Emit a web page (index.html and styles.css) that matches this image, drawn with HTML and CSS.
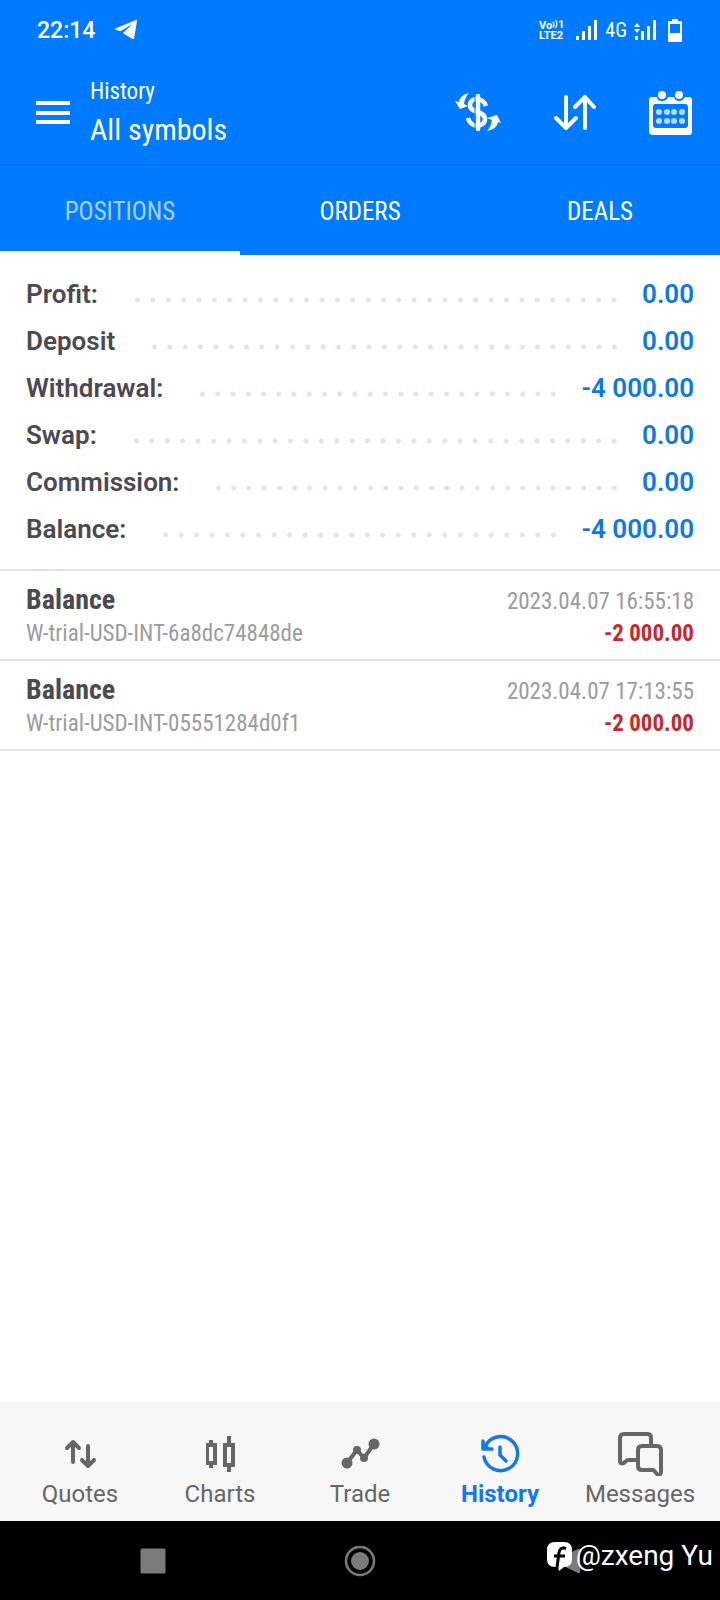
FILE: index.html
```html
<!DOCTYPE html>
<html lang="en">
<head>
<meta charset="utf-8">
<meta name="viewport" content="width=device-width, initial-scale=1">
<title>History</title>
<link rel="stylesheet" href="styles.css">
</head>
<body>
<div class="app">
  <div class="status">
    <div class="status-group">
      <span class="clock">22:14</span>
      <svg class="telegram" width="22" height="20" viewBox="0 0 22 20" aria-hidden="true"><path fill="currentColor" d="M21.200 0 .8 8.200C-.3 8.700-.2 9.400.8 9.700L5.500 11.200 15 5.500c.6-.4 1 0 .5.4L8.200 12.700v.6l8.800 5.500c1 .6 1.900.3 2.200-.9L22 1c.1-.9-.2-1.200-.8-1z"/></svg>
    </div>
    <div class="status-group">
      <svg class="volte" width="28" height="26" viewBox="0 0 28 26" role="img" aria-label="VoLTE 1 2">
        <text x="0" y="12">Vo</text><text x="19" y="11">1</text><text x="0" y="22">LTE2</text>
        <path fill="none" stroke="currentColor" stroke-width="1.300" d="M14 4.500q2 3 0 6M16.500 3q2.700 4 0 8"/>
      </svg>
      <svg class="signal" width="22" height="20" viewBox="0 0 22 20" aria-hidden="true"><path fill="currentColor" d="M0 16h3v4H0zM6 11h3v9H6zM12 6h3v14h-3zM18 0h3v20h-3z"/></svg>
      <span class="network">4G</span>
      <svg class="signal" width="22" height="20" viewBox="0 0 22 20" aria-hidden="true"><path fill="currentColor" d="M1 16h3v4H1zM7 11h3v9H7zM13 6h3v14h-3zM19 0h3v20h-3zM0 7l3-4 3 4zM0 9h6l-3 4z"/></svg>
      <svg class="battery" width="14" height="23" viewBox="0 0 14 23" aria-hidden="true"><path fill="currentColor" fill-rule="evenodd" d="M4 0h6v2h3q1 0 1 1v19q0 1-1 1H1q-1 0-1-1V3q0-1 1-1h3zM2 5v9h10V5z"/></svg>
    </div>
  </div>

  <header class="toolbar">
    <button class="icon-button" aria-label="Menu"><svg width="34" height="24" viewBox="0 0 34 24"><path fill="currentColor" d="M0 0h34v4H0zM0 10h34v4H0zM0 19h34v4H0z"/></svg></button>
    <div class="titles">
      <p class="overline">History</p>
      <h1 class="title">All symbols</h1>
    </div>
    <div class="actions">
      <button class="icon-button" aria-label="Symbols"><svg width="46" height="40" viewBox="0 0 46 40">
        <path fill="none" stroke="currentColor" stroke-width="4.500" stroke-linecap="round" d="M23 3v33"/>
        <path fill="none" stroke="currentColor" stroke-width="4.500" d="M31 13C28 4 15 4 15 12c0 9 15 5 15 14 0 9-15 9-17-1"/>
        <path fill="none" stroke="#007aff" stroke-width="1" d="M20 3v33"/>
        <path fill="currentColor" d="M14 0Q5 2 4 9L0 8l5 8 8-3-4-2Q10 4 14 0zM32 38q10-2 11-9l3 1-4-8-10 3 5 2q-1 7-5 11z"/>
      </svg></button>
      <button class="icon-button" aria-label="Sort"><svg width="42" height="36" viewBox="0 0 42 36"><path fill="none" stroke="currentColor" stroke-width="4" stroke-linecap="round" stroke-linejoin="round" d="M12 2v31M2 23l10 10 10-10M31 33V2M21 12 31 2l9 10"/></svg></button>
      <button class="icon-button" aria-label="Choose period"><svg width="44" height="44" viewBox="0 0 44 44">
        <path fill="currentColor" fill-rule="evenodd" d="M3 6h5q0 4 5 4t6-4h6q1 4 5 4t6-4h4q3 0 3 3v32q0 3-3 3H4q-4 0-4-4V9q0-3 3-3zM6 13q-2 0-2 3v18q0 3 3 3h29q3 0 3-3V16q0-3-3-3z"/>
        <circle fill="currentColor" cx="13" cy="4" r="4"/><circle fill="currentColor" cx="30" cy="4" r="4"/>
        <g class="calendar-days"><circle cx="10" cy="21" r="3"/><circle cx="18" cy="21" r="3"/><circle cx="25" cy="21" r="3"/><circle cx="33" cy="21" r="3"/><circle cx="10" cy="30" r="3"/><circle cx="18" cy="30" r="3"/><circle cx="25" cy="30" r="3"/><circle cx="33" cy="30" r="3"/></g>
      </svg></button>
    </div>
  </header>

  <div class="tabs" role="tablist">
    <button class="tab tab-active" role="tab" aria-selected="true">POSITIONS</button>
    <button class="tab" role="tab" aria-selected="false">ORDERS</button>
    <button class="tab" role="tab" aria-selected="false">DEALS</button>
  </div>

  <main class="content">
    <dl class="summary">
      <div class="summary-row"><dt>Profit:</dt><dd>0.00</dd></div>
      <div class="summary-row"><dt>Deposit</dt><dd>0.00</dd></div>
      <div class="summary-row"><dt>Withdrawal:</dt><dd>-4 000.00</dd></div>
      <div class="summary-row"><dt>Swap:</dt><dd>0.00</dd></div>
      <div class="summary-row"><dt>Commission:</dt><dd>0.00</dd></div>
      <div class="summary-row"><dt>Balance:</dt><dd>-4 000.00</dd></div>
    </dl>
    <ul class="deals">
      <li class="deal">
        <div class="deal-line"><span class="deal-name">Balance</span><time>2023.04.07 16:55:18</time></div>
        <div class="deal-line"><span>W-trial-USD-INT-6a8dc74848de</span><span class="amount">-2 000.00</span></div>
      </li>
      <li class="deal">
        <div class="deal-line"><span class="deal-name">Balance</span><time>2023.04.07 17:13:55</time></div>
        <div class="deal-line"><span>W-trial-USD-INT-05551284d0f1</span><span class="amount">-2 000.00</span></div>
      </li>
    </ul>
  </main>

  <nav class="bottom-nav">
    <a class="nav-item" href="#quotes"><svg width="46" height="44" viewBox="0 0 46 44"><path fill="none" stroke="currentColor" stroke-width="4" stroke-linecap="round" stroke-linejoin="round" d="M16 30V10M10 16l6-6 6 6M31 14v20M25 28l6 6 6-6"/></svg>Quotes</a>
    <a class="nav-item" href="#charts"><svg width="46" height="44" viewBox="0 0 46 44"><path fill="currentColor" fill-rule="evenodd" d="M12 8h4v3h4v22h-4v3h-4v-3H9V11h3zM12 15v14h4V15zM30 4h4v7h4v24h-4v5h-4v-5h-4V11h4zM30 15v16h4V15z"/></svg>Charts</a>
    <a class="nav-item" href="#trade"><svg width="46" height="44" viewBox="0 0 46 44"><path fill="none" stroke="currentColor" stroke-width="4" stroke-linejoin="round" d="m10 31 10-13 7 8 10-14"/><g fill="currentColor"><circle cx="10" cy="31" r="5.500"/><circle cx="20" cy="18" r="4"/><circle cx="27" cy="26" r="4"/><circle cx="37" cy="12" r="5.500"/></g></svg>Trade</a>
    <a class="nav-item nav-active" href="#history" aria-current="page"><svg width="46" height="44" viewBox="0 0 46 44"><g fill="none" stroke="currentColor" stroke-width="3.500" stroke-linecap="round" stroke-linejoin="round"><path d="M7 25a17 17 0 1 0 1-10M6 9v8h9M23 15v8l6 6"/></g><path fill="currentColor" d="m6 10 8 7H6z"/></svg>History</a>
    <a class="nav-item" href="#messages"><svg width="46" height="44" viewBox="0 0 46 44"><path fill="none" stroke="currentColor" stroke-width="4" stroke-linejoin="round" d="M20 28h-9q-1 0-3 2c-2 2-5 2-5-1V6q0-4 4-4h24q3 0 3 4v7M25 14h15q4 0 4 4v22c0 3-3 4-5 1q-2-3-3-3H25q-4 0-4-4V18q0-4 4-4z"/></svg>Messages</a>
  </nav>

  <div class="system-bar">
    <button class="system-button" aria-label="Recent apps"><svg width="26" height="26" viewBox="0 0 26 26"><rect width="25" height="25" x=".5" y=".5" rx="1.500" fill="currentColor"/></svg></button>
    <button class="system-button" aria-label="Home"><svg width="32" height="32" viewBox="0 0 32 32"><circle cx="16" cy="16" r="14" fill="none" stroke="currentColor" stroke-width="2.500"/><circle cx="16" cy="16" r="9" fill="currentColor"/></svg></button>
    <button class="system-button" aria-label="Back"><svg width="26" height="26" viewBox="0 0 26 26"><path fill="currentColor" d="M24 1q2-1 2 1v22q0 2-2 1L1 14q-1-1 0-2z"/></svg></button>
    <div class="watermark">
      <svg width="26" height="29" viewBox="0 0 26 29" aria-hidden="true"><path fill="#fff" d="M8 0h9q8 0 8 8v9q0 8-8 8l-5 4-1-4H8q-8 0-8-8V8q0-8 8-8z"/><path fill="none" stroke="#000" stroke-width="3" d="M19 6.500q-6-2-7 4l-2 15M7 14h11"/></svg>
      <span>@zxeng Yu</span>
    </div>
  </div>
</div>
</body>
</html>
```
FILE: styles.css
```css
* { box-sizing: border-box; }

body {
  margin: 0;
  background: #fff;
  color: #4b4a50;
  font-family: Roboto, "Liberation Sans", sans-serif;
}

button {
  padding: 0;
  border: 0;
  background: none;
  color: inherit;
  font: inherit;
}

svg { display: block; flex: none; }

p, h1, dl, dd, ul { margin: 0; padding: 0; }

.app {
  display: flex;
  flex-direction: column;
  min-height: 100vh;
}

.status, .toolbar, .tabs {
  background: #007aff;
  color: #fff;
}

.status {
  display: flex;
  align-items: center;
  justify-content: space-between;
  height: 60px;
  padding: 0 38px 0 37px;
}

.status-group { display: flex; align-items: center; }

.clock { font-size: 23px; font-weight: 500; }
.telegram { margin-left: 20px; }
.volte { margin-right: 9px; }
.volte text { fill: currentColor; font-size: 11px; font-weight: 700; }
.network {
  margin: 0 7px;
  font-family: "Roboto Condensed", Roboto, sans-serif;
  font-size: 20px;
}
.battery { margin-left: 12px; }

.toolbar {
  display: flex;
  align-items: center;
  height: 105px;
  padding: 2px 27px 0 36px;
  border-bottom: 1px solid #0070ee;
}

.titles {
  margin-left: 20px;
  padding-top: 2px;
  font-family: "Roboto Condensed", Roboto, sans-serif;
}
.overline { font-size: 23px; line-height: 32px; }
.title { font-size: 30px; font-weight: 400; line-height: 44px; }

.actions {
  display: flex;
  align-items: center;
  gap: 53px;
  margin-left: auto;
}

.calendar-days { fill: #b5dcff; }

.tabs { display: flex; height: 90px; }

.tab {
  flex: 1;
  padding-top: 6px;
  border-bottom: 4px solid transparent;
  font-family: "Roboto Condensed", Roboto, sans-serif;
  font-size: 25px;
}

.tab-active { border-color: #fff; color: #a9d0fc; }

.content { flex: 1; }

.summary { padding: 16px 26px 16px; }

.summary-row {
  display: flex;
  justify-content: space-between;
  font-size: 26px;
  font-weight: 600;
  line-height: 47px;
}

.summary-row::before {
  content: "";
  flex: 1;
  order: 1;
  height: 6px;
  margin: 26px 20px 0 32px;
  background: radial-gradient(circle, #e4e4e6 2px, transparent 3px) 0 0 / 15px 6px space;
}

.summary-row dd { order: 2; color: #0f78e4; }

.deals { border-top: 2px solid #e3e3e5; list-style: none; }

.deal {
  padding: 13px 26px 9px;
  border-bottom: 2px solid #e3e3e5;
  color: #9b9b9f;
  font-family: "Roboto Condensed", Roboto, sans-serif;
  font-size: 23px;
  line-height: 32px;
}

.deal-line {
  display: flex;
  align-items: baseline;
  justify-content: space-between;
}
.deal-name { color: #4b4a50; font-size: 28px; font-weight: 700; }
.amount { color: #c8282a; font-weight: 700; }

.bottom-nav {
  display: flex;
  padding: 30px 10px 11px;
  background: #f7f7f7;
}

.nav-item {
  display: flex;
  flex: 1;
  flex-direction: column;
  align-items: center;
  gap: 2px;
  color: #666;
  font-size: 24px;
  line-height: 32px;
  text-decoration: none;
}

.nav-active { color: #1179e8; font-weight: 700; }

.system-bar {
  display: grid;
  grid-template-columns: repeat(3, 1fr);
  align-items: center;
  justify-items: center;
  position: relative;
  height: 79px;
  padding: 0 50px;
  background: #000;
  color: #7b7b7b;
}

.watermark {
  display: flex;
  align-items: center;
  gap: 3px;
  position: absolute;
  right: 7px;
  top: 16px;
  color: #fff;
  font-size: 28px;
  line-height: 38px;
}
```
